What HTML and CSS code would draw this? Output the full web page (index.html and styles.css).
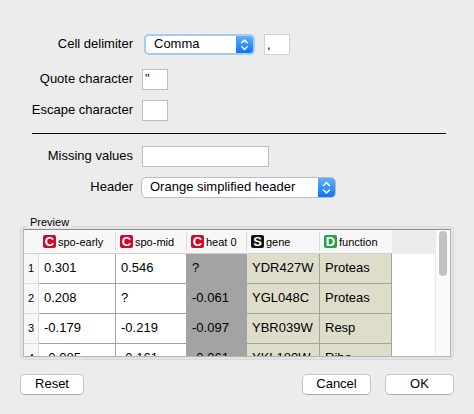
FILE: index.html
```html
<!DOCTYPE html>
<html lang="en">
<head>
<meta charset="utf-8">
<title>Import options</title>
<link rel="stylesheet" href="styles.css">
</head>
<body>
<form class="dialog">
  <div class="fields">
    <label class="label" for="delimiter">Cell delimiter</label>
    <div class="control">
      <span class="combo combo-focused">
        <select id="delimiter"><option>Comma</option></select>
        <svg class="combo-arrows" viewBox="0 0 17 19" aria-hidden="true"><path d="M5.5 7.5 8.5 4.500l3 3M5.500 12l3 3 3-3"/></svg>
      </span>
      <input class="text-box char-box dimmed" type="text" value="," aria-label="Delimiter character">
    </div>
    <label class="label after-gap" for="quote">Quote character</label>
    <div class="control after-gap"><input class="text-box char-box quote" id="quote" type="text" value="&quot;"></div>
    <label class="label" for="escape">Escape character</label>
    <div class="control"><input class="text-box char-box" id="escape" type="text"></div>
  </div>
  <hr class="rule">
  <div class="fields">
    <label class="label" for="missing">Missing values</label>
    <div class="control"><input class="text-box missing-box" id="missing" type="text"></div>
    <label class="label" for="header">Header</label>
    <div class="control">
      <span class="combo combo-wide">
        <select id="header"><option>Orange simplified header</option></select>
        <svg class="combo-arrows" viewBox="0 0 17 19" aria-hidden="true"><path d="M5.5 7.5 8.5 4.500l3 3M5.500 12l3 3 3-3"/></svg>
      </span>
    </div>
  </div>
  <section class="preview">
    <h2 class="preview-title">Preview</h2>
    <div class="group">
      <div class="view">
        <div class="viewport">
          <table>
            <colgroup><col class="c-index"><col class="c-early"><col class="c-mid"><col class="c-heat"><col class="c-gene"><col class="c-function"><col></colgroup>
            <thead>
              <tr>
                <td class="corner"></td>
                <th scope="col"><span class="heading"><b class="badge red">C</b>spo-early</span></th>
                <th scope="col"><span class="heading"><b class="badge red">C</b>spo-mid</span></th>
                <th scope="col"><span class="heading"><b class="badge red">C</b>heat 0</span></th>
                <th scope="col"><span class="heading"><b class="badge black">S</b>gene</span></th>
                <th scope="col"><span class="heading last"><b class="badge green">D</b>function</span></th>
                <td class="head-filler"></td>
              </tr>
            </thead>
            <tbody>
              <tr><th scope="row">1</th><td>0.301</td><td>0.546</td><td class="selected">?</td><td class="meta">YDR427W</td><td class="meta">Proteas</td><td class="filler"></td></tr>
              <tr><th scope="row">2</th><td>0.208</td><td>?</td><td class="selected">-0.061</td><td class="meta">YGL048C</td><td class="meta">Proteas</td><td class="filler"></td></tr>
              <tr><th scope="row">3</th><td>-0.179</td><td>-0.219</td><td class="selected">-0.097</td><td class="meta">YBR039W</td><td class="meta">Resp</td><td class="filler"></td></tr>
              <tr><th scope="row">4</th><td>-0.085</td><td>-0.161</td><td class="selected">-0.061</td><td class="meta">YKL180W</td><td class="meta">Ribo</td><td class="filler"></td></tr>
            </tbody>
          </table>
        </div>
        <div class="scrollbar"><div class="thumb"></div></div>
      </div>
    </div>
  </section>
  <div class="buttons">
    <button class="reset" type="button">Reset</button>
    <button type="button">Cancel</button>
    <button type="button">OK</button>
  </div>
</form>
</body>
</html>
```
FILE: styles.css
```css
* { box-sizing: border-box; }

body {
  margin: 0;
  background: #ececec;
  color: #000;
  font: 13px/20px "Liberation Sans", Arial, sans-serif;
}

input, select, button {
  font: inherit;
  color: inherit;
  margin: 0;
}

.dialog {
  display: flex;
  flex-direction: column;
  height: 100vh;
  padding: 34px 20px 19px;
}

/* Form rows */
.fields {
  display: grid;
  grid-template-columns: 113px 1fr;
  gap: 10px 9px;
}

.label {
  text-align: right;
  line-height: 20px;
}

.control {
  display: flex;
  align-items: center;
  height: 21px;
}

.after-gap { margin-top: 4px; }

.text-box {
  height: 21px;
  padding: 0 2px;
  border: 1px solid #bdbdbd;
  border-radius: 0;
  background: #fff;
  outline: 0;
}

.char-box { width: 26px; }
.missing-box { width: 127px; }
.dimmed {
  margin-left: 9px;
  border-color: #d2d2d2;
}
.quote {
  padding-bottom: 2px;
  color: #00007f;
}

.combo {
  display: flex;
  width: 111px;
  height: 21px;
  border: 1px solid #bcbcbc;
  border-radius: 5px;
  background: #fff;
  overflow: hidden;
}
.combo-focused {
  margin-left: 2px;
  border: 2px solid #a3cdf3;
}
.combo-wide {
  width: 195px;
  margin-left: -1px;
}

.combo select {
  flex: 1;
  min-width: 0;
  padding: 0 8px 3px;
  border: 0;
  background: transparent;
  outline: 0;
  appearance: none;
  line-height: 15px;
}

.combo-arrows {
  width: 17px;
  height: 100%;
  background: linear-gradient(#62b0fb, #0a74fb);
  fill: none;
  stroke: #fff;
  stroke-width: 1.6;
  stroke-linecap: round;
  stroke-linejoin: round;
}

.rule {
  width: calc(100% - 20px);
  height: 1px;
  margin: 12px 8px 12px 12px;
  border: 0;
  background: #000;
}

/* Preview */
.preview {
  display: flex;
  flex: 1;
  flex-direction: column;
  min-height: 0;
  margin-top: 18px;
}

.preview-title {
  position: relative;
  align-self: flex-start;
  margin: 0 0 -2px 8px;
  padding: 0 2px;
  background: #ececec;
  font-size: 11px;
  font-weight: 400;
  line-height: 12px;
}

.group {
  display: flex;
  flex: 1;
  min-height: 0;
  padding: 2px;
  border: 1px solid #dadada;
  border-radius: 4px;
  background: #e3e3e3;
}

.view {
  display: flex;
  flex: 1;
  min-width: 0;
  border: 1px solid #b4b4b4;
  border-top-color: #8f8f8f;
  background: #fff;
}

.viewport {
  flex: 1;
  min-width: 0;
  overflow: hidden;
}

.scrollbar {
  width: 15px;
  padding: 1px 2px 0 3px;
  border-left: 1px solid #e8e8e8;
  background: #fafafa;
}
.thumb {
  width: 8px;
  height: 45px;
  border-radius: 4px;
  background: #c2c2c2;
}

table {
  width: 100%;
  table-layout: fixed;
  border-spacing: 0;
}
.c-index { width: 15px; }
.c-early { width: 77px; }
.c-mid { width: 71px; }
.c-heat { width: 60px; }
.c-gene { width: 73px; }
.c-function { width: 72px; }

th { font-weight: 400; }

thead th, .corner, .head-filler {
  height: 24px;
  padding: 0;
  border: 0;
  border-bottom: 1px solid #d0d0d0;
  background: #f7f7f7;
  font-size: 11px;
  line-height: 16px;
}
thead .head-filler {
  border-bottom-color: #ececec;
  background: #ececec;
}

.heading {
  display: flex;
  align-items: center;
  height: 19px;
  padding-left: 4px;
  border-right: 1px solid #dcdcdc;
  gap: 2px;
}
.last { border-right-color: transparent; }

.badge {
  width: 13px;
  height: 13px;
  border-radius: 2px;
  color: #fff;
  font-size: 13px;
  line-height: 13px;
  text-align: center;
}
.red { background: #ce0a2c; }
.black { background: #111; }
.green { background: #27a04c; }

tbody th {
  padding: 0 0 2px;
  border-right: 1px solid #dcdcdc;
  border-bottom: 1px solid #dcdcdc;
  background: #f7f7f7;
  font-size: 11px;
}

tbody td {
  height: 30px;
  padding: 0 0 2px 5px;
  border-right: 1px solid #a3a3a3;
  border-bottom: 1px solid #a3a3a3;
  white-space: nowrap;
}
tbody .selected {
  border-color: #a3a3a3;
  background: #a3a3a3;
}
tbody .meta { background: #deddca; }
tbody .filler { border: 0; }

/* Buttons */
.buttons {
  display: flex;
  gap: 14px;
  margin-top: 14px;
}

button {
  width: 69px;
  height: 21px;
  padding: 0 0 2px;
  border: 1px solid #c4c4c4;
  border-bottom-color: #aaa;
  border-radius: 5px;
  background: #fff;
  line-height: 17px;
}
.reset {
  width: 64px;
  margin-right: auto;
}
```
